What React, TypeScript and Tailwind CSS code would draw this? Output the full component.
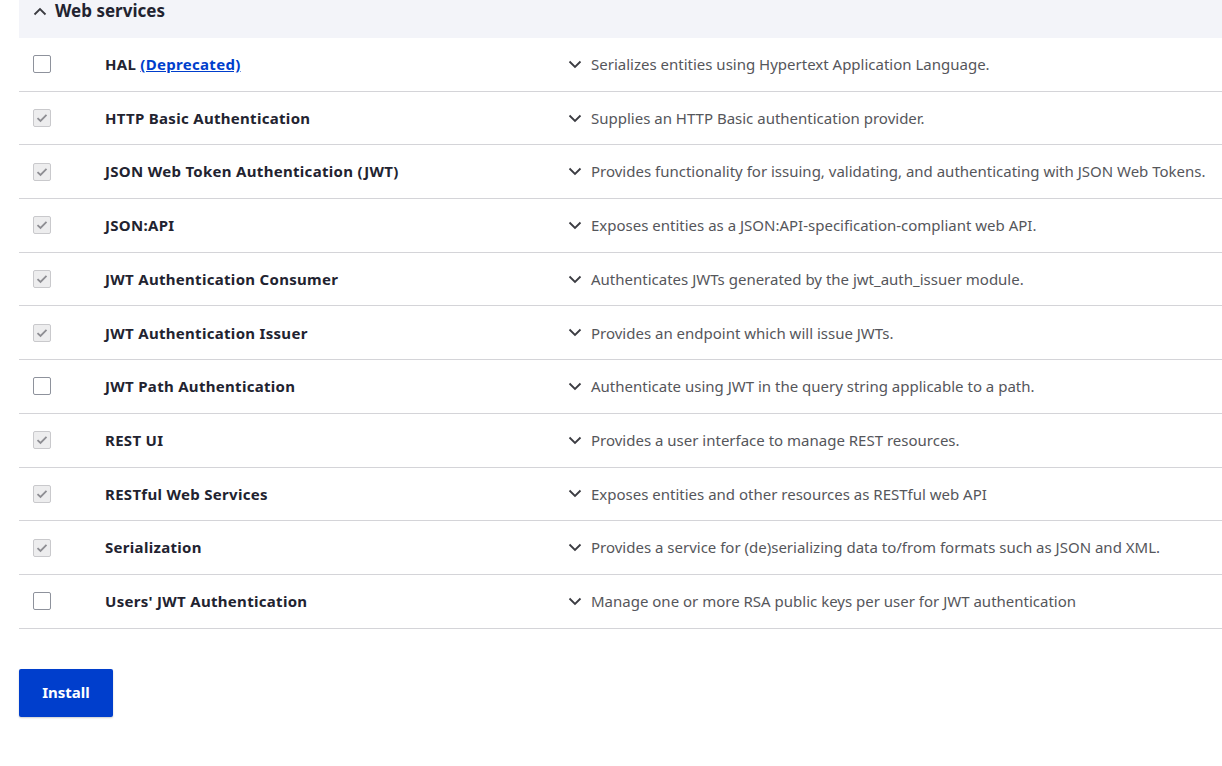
import React from "react";

const rows: { title: string; desc: string; checked: boolean; deprecated?: boolean }[] = [
  { title: "HAL", desc: "Serializes entities using Hypertext Application Language.", checked: false, deprecated: true },
  { title: "HTTP Basic Authentication", desc: "Supplies an HTTP Basic authentication provider.", checked: true },
  { title: "JSON Web Token Authentication (JWT)", desc: "Provides functionality for issuing, validating, and authenticating with JSON Web Tokens.", checked: true },
  { title: "JSON:API", desc: "Exposes entities as a JSON:API-specification-compliant web API.", checked: true },
  { title: "JWT Authentication Consumer", desc: "Authenticates JWTs generated by the jwt_auth_issuer module.", checked: true },
  { title: "JWT Authentication Issuer", desc: "Provides an endpoint which will issue JWTs.", checked: true },
  { title: "JWT Path Authentication", desc: "Authenticate using JWT in the query string applicable to a path.", checked: false },
  { title: "REST UI", desc: "Provides a user interface to manage REST resources.", checked: true },
  { title: "RESTful Web Services", desc: "Exposes entities and other resources as RESTful web API", checked: true },
  { title: "Serialization", desc: "Provides a service for (de)serializing data to/from formats such as JSON and XML.", checked: true },
  { title: "Users' JWT Authentication", desc: "Manage one or more RSA public keys per user for JWT authentication", checked: false },
];

function Checkbox({ checked }: { checked: boolean }) {
  if (checked) {
    return (
      <div className="w-[18px] h-[18px] rounded-[2px] border border-[#c9c9cc] bg-[#ededee] flex items-center justify-center">
        <svg width="12" height="10" viewBox="0 0 12 10">
          <path d="M1.5 5.2 L4.5 8 L10.5 1.8" fill="none" stroke="#8e8e93" strokeWidth="1.8" />
        </svg>
      </div>
    );
  }
  return <div className="w-[18px] h-[18px] rounded-[2px] border border-[#8e929c] bg-white" />;
}

function Chevron({ up }: { up?: boolean }) {
  return (
    <svg width="14" height="9" viewBox="0 0 14 9">
      <path d={up ? "M1.5 7.5 L7 2 L12.5 7.5" : "M1.5 1.5 L7 7 L12.5 1.5"} fill="none" stroke="#3b3c42" strokeWidth="1.8" />
    </svg>
  );
}

export default function App() {
  return (
    <div className="w-[1222px] h-[766px] bg-white overflow-hidden" style={{ fontFamily: '"Noto Sans", "Open Sans", sans-serif' }}>
      <div className="ml-[19px] w-[1203px]">
        <div className="h-[38px] bg-[#f3f4f9] flex items-start pl-[14px]">
          <div className="flex items-center gap-[8px] h-[22px]">
            <Chevron up />
            <span className="text-[17px] font-bold text-[#222330]">Web services</span>
          </div>
        </div>
        {rows.map((r) => (
          <div key={r.title} className="h-[53.7px] border-b border-[#d4d4d8] flex items-center text-[15px]">
            <div className="w-[86px] pl-[14px] flex items-center">
              <Checkbox checked={r.checked} />
            </div>
            <div className="w-[463px] font-bold text-[#222330] tracking-[0.3px]">
              {r.title}
              {r.deprecated && (
                <>
                  {" "}
                  <a href="#" className="text-[#003ecc] underline">(Deprecated)</a>
                </>
              )}
            </div>
            <div className="flex items-center gap-[9px] text-[#55565b] whitespace-nowrap">
              <Chevron />
              <span>{r.desc}</span>
            </div>
          </div>
        ))}
        <div className="pt-[40px]">
          <button className="h-[48px] w-[94px] rounded-[2px] bg-[#003ecc] text-white font-bold text-[15px] shadow-[0_1px_2px_rgba(0,0,0,0.2)]">
            Install
          </button>
        </div>
      </div>
    </div>
  );
}
